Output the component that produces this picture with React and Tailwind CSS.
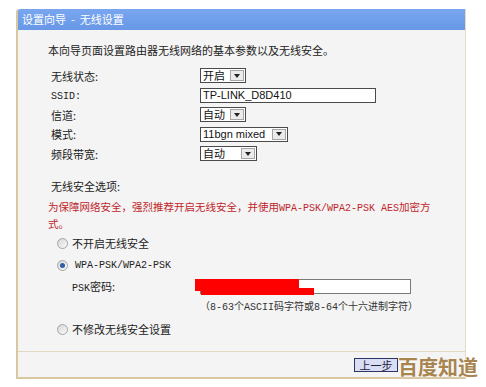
import React from "react";

const cjk = "font-['Noto_Sans_CJK_SC',sans-serif]";
const mono = "font-['Liberation_Mono','Noto_Sans_CJK_SC',monospace]";

const Arrow = () => (
  <div className="m-px flex w-[14px] items-center justify-center border border-[#a5a5a5] bg-[#ebebeb]">
    <div className="h-0 w-0 border-x-[3.5px] border-t-[4px] border-x-transparent border-t-[#222]" />
  </div>
);

const Select = ({ value, width, ascii }) => (
  <div
    className={`flex h-[15px] border border-[#4a4a4a] bg-white ${width}`}
  >
    <span
      className={`flex-1 pl-[2px] text-[11px] leading-[13px] text-[#111] ${
        ascii ? "font-['Liberation_Sans',sans-serif]" : cjk
      }`}
    >
      {value}
    </span>
    <Arrow />
  </div>
);

const Row = ({ label, children }) => (
  <div className="flex h-[19.5px] items-center">
    <div className={`w-[152px] pl-[3px] text-[11px] text-[#222] ${cjk}`}>
      {label}
    </div>
    {children}
  </div>
);

const Radio = ({ checked }) => (
  <div className="flex h-[11px] w-[11px] items-center justify-center rounded-full border border-[#a4a4a4] bg-gradient-to-br from-[#d6d6d6] to-[#fbfbfb]">
    {checked && <div className="h-[5px] w-[5px] rounded-full bg-[#2d5fa6]" />}
  </div>
);

export default function App() {
  return (
    <div className="relative h-[387px] w-[486px] overflow-hidden bg-white pl-[16px] pt-[9px]">
      <div className="w-[450px] rounded-tl-[3px] border-b-2 border-l-2 border-r border-[#d9c7a2] border-r-[#e6dcc6]">
        <div
          className={`h-[21px] rounded-tl-[2px] bg-gradient-to-b from-[#79a6ef] to-[#6797e6] pl-[4px] text-[11px] leading-[21px] text-white ${cjk}`}
        >
          设置向导<span className="px-[5px]">-</span>无线设置
        </div>

        <div className="h-[321px] bg-[#f4f4f4] pl-[30px] pt-[12px]">
          <p className={`text-[11px] leading-[16px] text-[#222] ${cjk}`}>
            本向导页面设置路由器无线网络的基本参数以及无线安全。
          </p>

          <div className="mt-[8px]">
            <Row label="无线状态:">
              <Select value="开启" width="w-[46px]" />
            </Row>
            <Row label={<span className={mono + " text-[10px]"}>SSID:</span>}>
              <div className="h-[15px] w-[176px] border border-[#4a4a4a] bg-white pl-[2px] font-['Liberation_Sans',sans-serif] text-[11px] leading-[13px] text-[#111]">
                TP-LINK_D8D410
              </div>
            </Row>
            <Row label="信道:">
              <Select value="自动" width="w-[46px]" />
            </Row>
            <Row label="模式:">
              <Select value="11bgn mixed" width="w-[88px]" ascii />
            </Row>
            <Row label="频段带宽:">
              <Select value="自动" width="w-[57px]" />
            </Row>
          </div>

          <p
            className={`mt-[14px] pl-[3px] text-[11px] leading-[16px] text-[#222] ${cjk}`}
          >
            无线安全选项:
          </p>
          <p
            className={`mt-[5px] text-[10.5px] leading-[15px] text-[#c0262b] ${cjk}`}
          >
            <span className="whitespace-nowrap">
              为保障网络安全，强烈推荐开启无线安全，并使用
              <span className={mono + " text-[10px]"}>
                WPA-PSK/WPA2-PSK AES
              </span>
              加密方
            </span>
            <br />
            式。
          </p>

          <div className="mt-[3px] flex h-[20px] items-center gap-[4px] pl-[9px]">
            <Radio />
            <span className={`text-[11px] text-[#222] ${cjk}`}>
              不开启无线安全
            </span>
          </div>
          <div className="mt-[2px] flex h-[20px] items-center gap-[7px] pl-[9px]">
            <Radio checked />
            <span className={`text-[10px] text-[#222] ${mono}`}>
              WPA-PSK/WPA2-PSK
            </span>
          </div>
          <div className="flex h-[22px] items-center">
            <div className={`w-[152px] pl-[24px] text-[11px] text-[#222] ${cjk}`}>
              <span className={mono + " text-[10px]"}>PSK</span>密码:
            </div>
            <div className="relative h-[15px] w-[211px] border border-[#7a7a7a] bg-white">
              <div className="absolute -left-[6px] -top-px h-[12px] w-[104px] bg-[#f00]" />
              <div className="absolute left-0 top-[8px] h-[7px] w-[113px] bg-[#f00]" />
            </div>
          </div>
          <div className="flex h-[20px] items-center pl-[152px]">
            <span className={`text-[10px] text-[#333] ${mono}`}>
              （8-63个ASCII码字符或8-64个十六进制字符）
            </span>
          </div>
          <div className="mt-[2px] flex h-[20px] items-center gap-[4px] pl-[9px]">
            <Radio />
            <span className={`text-[11px] text-[#222] ${cjk}`}>
              不修改无线安全设置
            </span>
          </div>
        </div>

        <div className="flex h-[26px] items-center justify-end border-t border-[#e2d8c2] bg-[#f4f4f4] pr-[67px]">
          <button
            className={`h-[14px] w-[44px] border border-[#2d3466] bg-[#dadef5] text-[11px] leading-[12px] text-[#1c2040] ${cjk}`}
          >
            上一步
          </button>
        </div>
      </div>

      <div
        className={`absolute left-[398px] top-[355px] text-[20px] font-bold leading-[24px] text-[#a8844f] [text-shadow:0_0_2px_#fff] ${cjk}`}
      >
        百度知道
      </div>
    </div>
  );
}
